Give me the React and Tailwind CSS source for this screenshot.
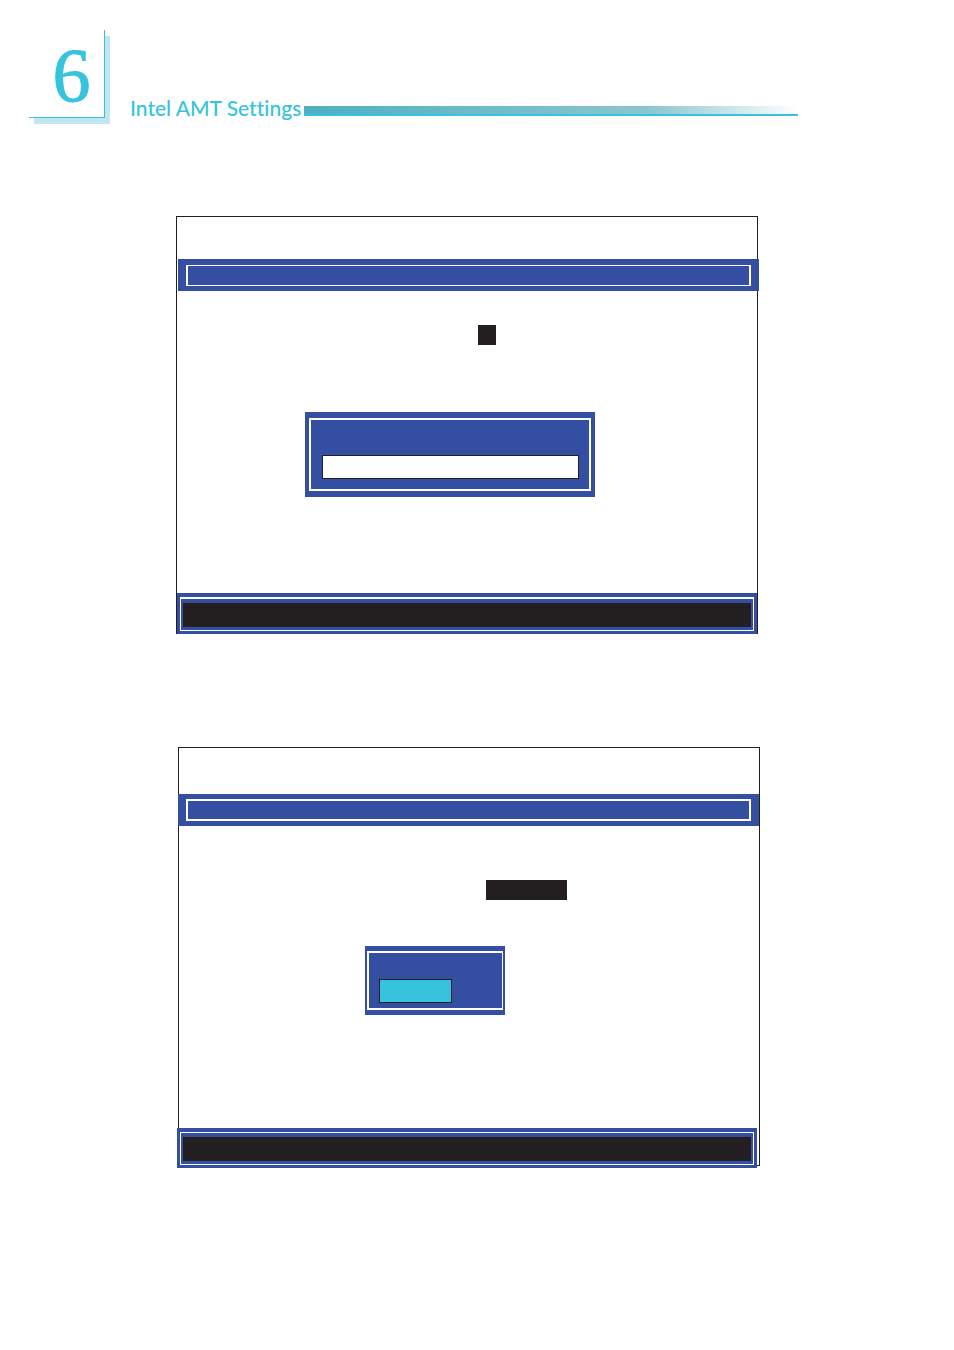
import { useState } from "react";

function ChapterHeader({ number, title }) {
  return (
    <header className="flex items-start pl-[29px] pr-39 pt-[30px] text-[#35c3de]">
      <div className="flex h-[88px] w-[76px] shrink-0 justify-center border-b border-r border-[#35c3de] bg-white pl-2.5 pt-[5px] shadow-[5px_6px_0_0_#c1e6f0]">
        <span className="font-['Liberation_Serif',serif] text-[76px] leading-[80px] [-webkit-text-stroke:1px_#35c3de]">
          {number}
        </span>
      </div>
      <h1 className="ml-[25px] mt-16 shrink-0 whitespace-nowrap font-['Lato',sans-serif] text-[21px] font-medium leading-7 [font-variant-ligatures:none]">
        {title}
      </h1>
      <div className="ml-[3px] mt-[76px] h-2.5 flex-1 border-b-2 border-[#35c3de] bg-linear-to-r from-[#4eafbf] via-[#8ac6d1] via-70% to-white" />
    </header>
  );
}

function TitleBar({ className, frameClass }) {
  return (
    <div className={`h-8 bg-[#344fa2] px-2 ${className}`}>
      <div className={`h-full border-white ${frameClass}`} />
    </div>
  );
}

function StatusBar({ className, frameClass }) {
  return (
    <div className={`bg-[#344fa2] px-[3px] pb-[3px] pt-1 ${className}`}>
      <div className={`h-full border border-white px-0.5 pt-1 ${frameClass}`}>
        <div className="h-full bg-[#231f20]" />
      </div>
    </div>
  );
}

export default function App() {
  const [password, setPassword] = useState("");

  return (
    <div className="min-h-screen bg-white pb-45">
      <ChapterHeader number="6" title="Intel AMT Settings" />

      <main className="pl-44 pr-49">
        <section className="mt-[94px] flex h-[418px] flex-col border-x border-t border-[#231f20]">
          <TitleBar
            className="-mr-0.5 ml-px mt-[42px] pb-[5px] pt-1.5"
            frameClass="border-x-2 border-y"
          />
          <div className="ml-[301px] mt-[34px] h-5 w-[18px] bg-[#231f20]" />
          <div className="ml-32 mt-[67px] h-[85px] w-[290px] bg-[#344fa2] px-1 py-1.5">
            <div className="h-full border-2 border-white px-[11px] pt-[35px]">
              <input
                type="password"
                aria-label="Password"
                value={password}
                onChange={(e) => setPassword(e.target.value)}
                className="block h-6 w-[257px] border border-[#231f20] bg-white px-1 text-sm outline-none"
              />
            </div>
          </div>
          <StatusBar
            className="mt-auto h-[41px]"
            frameClass="border-t-2 pb-[3px]"
          />
        </section>

        <section className="-mr-0.5 ml-0.5 mt-[113px] flex h-[419px] flex-col border border-[#231f20]">
          <TitleBar
            className="-ml-px mt-[46px] py-[5px]"
            frameClass="border-2"
          />
          <div className="ml-[307px] mt-[54px] h-5 w-[81px] bg-[#231f20]" />
          <div className="ml-[186px] mt-[46px] h-[69px] w-[140px] bg-[#344fa2] px-0.5 py-[5px]">
            <div className="h-full border-2 border-r border-white px-2.5 pt-[26px]">
              <button
                type="button"
                aria-label="Select"
                className="block h-6 w-[73px] border border-[#231f20] bg-[#35c3de]"
              />
            </div>
          </div>
          <StatusBar
            className="-mb-[3px] -ml-0.5 mr-0.5 mt-auto h-10"
            frameClass="pb-[3px]"
          />
        </section>
      </main>
    </div>
  );
}
